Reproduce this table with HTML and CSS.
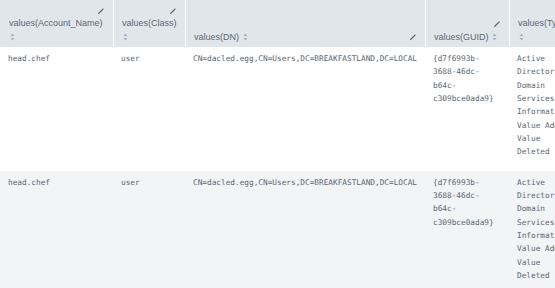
FILE: index.html
```html
<!DOCTYPE html>
<html>
<head>
<meta charset="utf-8">
<link rel="stylesheet" href="styles.css">
</head>
<body>
<table class="grid">
  <colgroup>
    <col class="c1"><col class="c2"><col class="c3"><col class="c4"><col class="c5">
  </colgroup>
  <thead>
    <tr>
      <th><span class="edit"><svg width="8" height="8" viewBox="0 0 8 8"><path d="M1 7.2 L1.4 5.8 L6 1.2 L6.9 2.1 L2.3 6.7 Z" fill="#5c6773"/></svg></span>values(Account_Name) <span class="sort"><svg width="5" height="8" viewBox="0 0 5 8"><path d="M2.5 0.5 L4.5 3 L0.5 3 Z M2.5 7.5 L4.5 5 L0.5 5 Z" fill="#a7b0ba"/></svg></span></th>
      <th class="div"><span class="edit"><svg width="8" height="8" viewBox="0 0 8 8"><path d="M1 7.2 L1.4 5.8 L6 1.2 L6.9 2.1 L2.3 6.7 Z" fill="#5c6773"/></svg></span>values(Class) <span class="sort"><svg width="5" height="8" viewBox="0 0 5 8"><path d="M2.5 0.5 L4.5 3 L0.5 3 Z M2.5 7.5 L4.5 5 L0.5 5 Z" fill="#a7b0ba"/></svg></span></th>
      <th class="div"><span class="edit"><svg width="8" height="8" viewBox="0 0 8 8"><path d="M1 7.2 L1.4 5.8 L6 1.2 L6.9 2.1 L2.3 6.7 Z" fill="#5c6773"/></svg></span>values(DN) <span class="sort"><svg width="5" height="8" viewBox="0 0 5 8"><path d="M2.5 0.5 L4.5 3 L0.5 3 Z M2.5 7.5 L4.5 5 L0.5 5 Z" fill="#a7b0ba"/></svg></span></th>
      <th class="div"><span class="edit"><svg width="8" height="8" viewBox="0 0 8 8"><path d="M1 7.2 L1.4 5.8 L6 1.2 L6.9 2.1 L2.3 6.7 Z" fill="#5c6773"/></svg></span>values(GUID) <span class="sort"><svg width="5" height="8" viewBox="0 0 5 8"><path d="M2.5 0.5 L4.5 3 L0.5 3 Z M2.5 7.5 L4.5 5 L0.5 5 Z" fill="#a7b0ba"/></svg></span></th>
      <th class="div"><span class="edit"><svg width="8" height="8" viewBox="0 0 8 8"><path d="M1 7.2 L1.4 5.8 L6 1.2 L6.9 2.1 L2.3 6.7 Z" fill="#5c6773"/></svg></span>values(Type) <span class="sort"><svg width="5" height="8" viewBox="0 0 5 8"><path d="M2.5 0.5 L4.5 3 L0.5 3 Z M2.5 7.5 L4.5 5 L0.5 5 Z" fill="#a7b0ba"/></svg></span></th>
    </tr>
  </thead>
  <tbody>
    <tr>
      <td>head.chef</td>
      <td>user</td>
      <td>CN=dacled.egg,CN=Users,DC=BREAKFASTLAND,DC=LOCAL</td>
      <td>{d7f6993b-3688-46dc-b64c-c309bce0ada9}</td>
      <td><div>Active Directory Domain Services</div><div>Information</div><div>Value Added</div><div>Value Deleted</div></td>
    </tr>
    <tr class="odd">
      <td>head.chef</td>
      <td>user</td>
      <td>CN=dacled.egg,CN=Users,DC=BREAKFASTLAND,DC=LOCAL</td>
      <td>{d7f6993b-3688-46dc-b64c-c309bce0ada9}</td>
      <td><div>Active Directory Domain Services</div><div>Information</div><div>Value Added</div><div>Value Deleted</div></td>
    </tr>
  </tbody>
</table>
</body>
</html>
```

FILE: styles.css
```css
html, body {
  margin: 0;
  padding: 0;
  background: #ffffff;
  overflow: hidden;
}

.grid {
  table-layout: fixed;
  border-collapse: separate;
  border-spacing: 0;
  width: 581px;
}

.c1 { width: 113px; }
.c2 { width: 72px; }
.c3 { width: 240px; }
.c4 { width: 84px; }
.c5 { width: 72px; }

th {
  background: #e1e6eb;
  color: #5c6773;
  font-family: "Liberation Sans", Arial, sans-serif;
  font-size: 9px;
  font-weight: normal;
  line-height: 13.33px;
  text-align: left;
  vertical-align: bottom;
  padding: 4px 8px 3px 9px;
  height: 40px;
  white-space: normal;
}

th.div {
  box-shadow: inset 1px 0 0 #ffffff;
}

.edit {
  float: right;
  width: 9px;
  margin-left: 10px;
  height: 13.33px;
  display: flex;
  align-items: center;
  justify-content: flex-end;
}

.sort {
  display: inline-block;
  vertical-align: -1px;
  margin-left: 1px;
}

.sort svg, .edit svg {
  display: block;
}

td {
  font-family: "DejaVu Sans Mono", "Liberation Mono", monospace;
  font-size: 7.75px;
  line-height: 13.33px;
  color: #5c6773;
  vertical-align: top;
  padding: 5px 9px 12px 8px;
}

tr.odd td {
  background: #f2f4f5;
}
```
